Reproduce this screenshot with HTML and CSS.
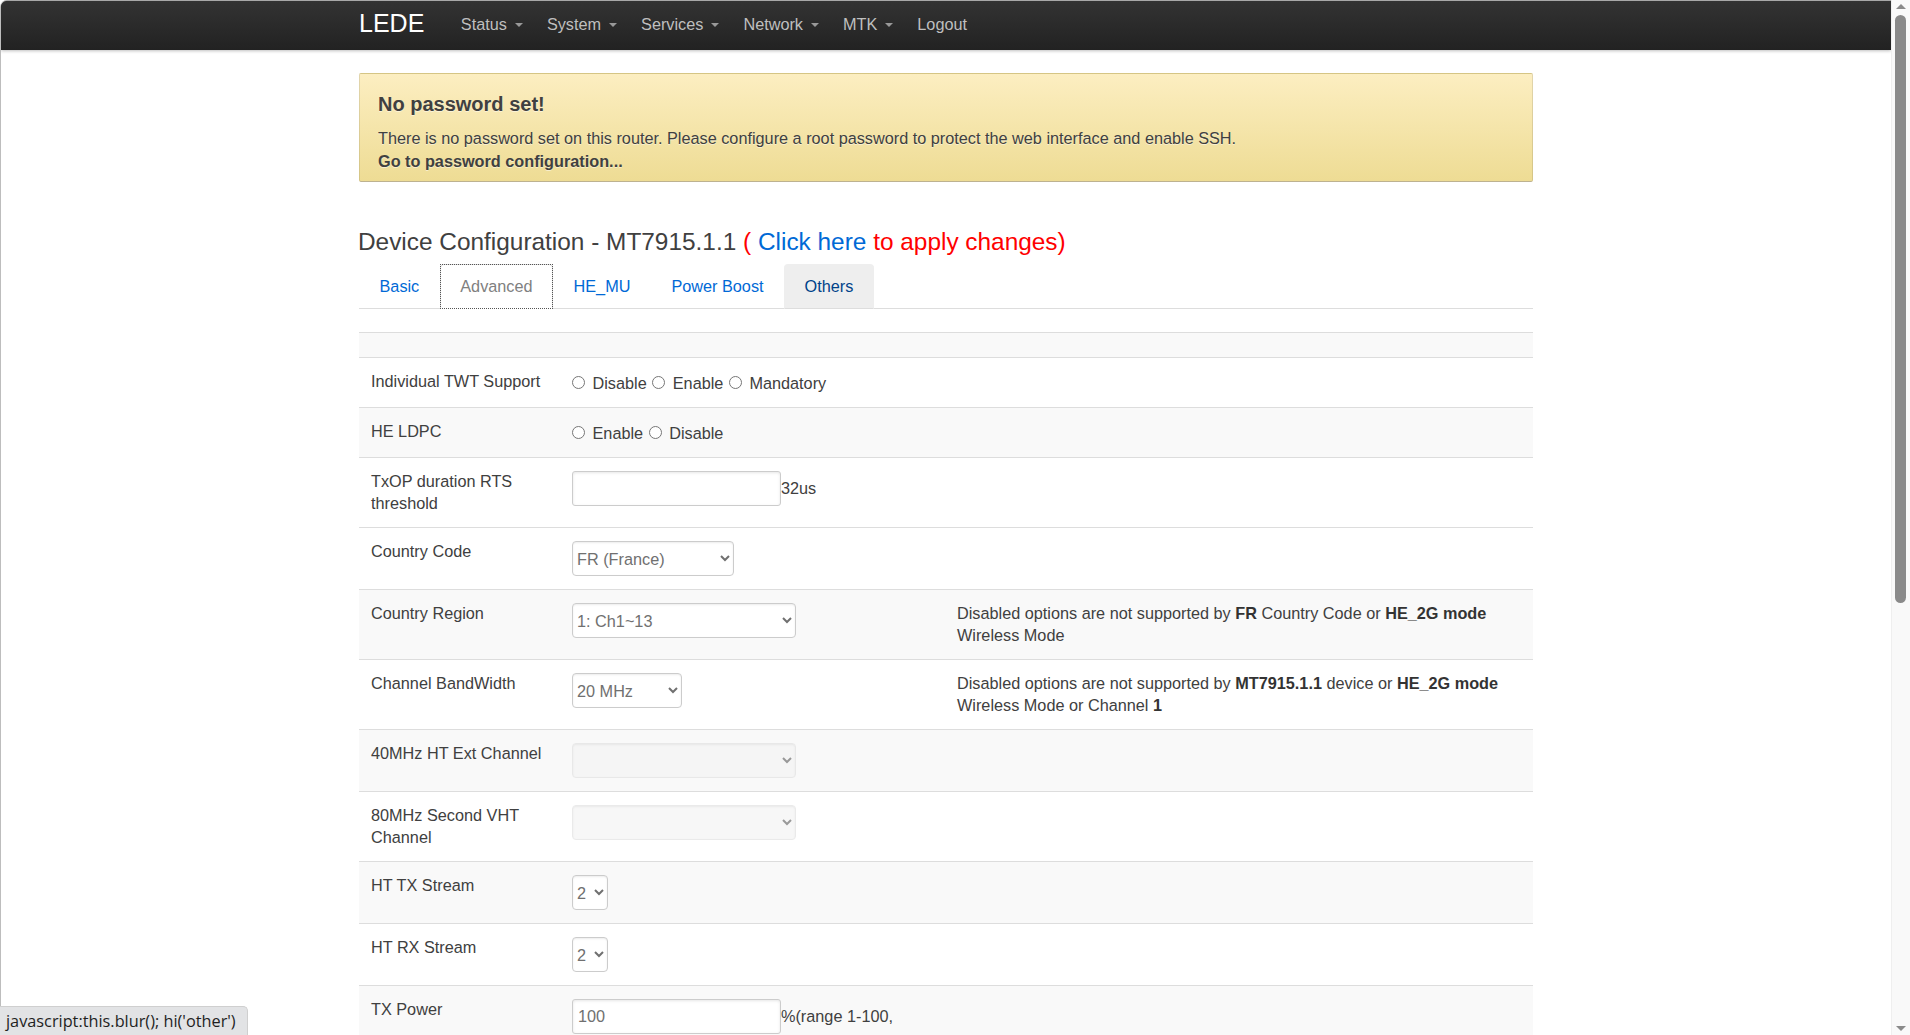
FILE: index.html
```html
<!DOCTYPE html>
<html lang="en">
<head>
    <meta charset="UTF-8">
    <meta name="viewport" content="width=device-width, initial-scale=1.0">
    <title>LEDE - Wireless - MT7915.1.1</title>
    <link rel="stylesheet" href="styles.css">
</head>
<body>
    <div class="window">
        <header class="topbar">
            <div class="topbar-inner">
                <a class="brand" href="#">LEDE</a>
                <ul class="nav">
                    <li><a href="#">Status<b class="caret"></b></a></li>
                    <li><a href="#">System<b class="caret"></b></a></li>
                    <li><a href="#">Services<b class="caret"></b></a></li>
                    <li><a href="#">Network<b class="caret"></b></a></li>
                    <li><a href="#">MTK<b class="caret"></b></a></li>
                    <li><a href="#">Logout</a></li>
                </ul>
            </div>
        </header>

        <div class="container">
            <div class="alert-message warning">
                <h4>No password set!</h4>
                <p>There is no password set on this router. Please configure a root password to protect the web interface and enable SSH.</p>
                <a class="alert-link" href="#">Go to password configuration...</a>
            </div>

            <h2 class="title">Device Configuration - MT7915.1.1 <span class="apply">( <a href="#">Click here</a> to apply changes)</span></h2>

            <ul class="tabs">
                <li><a href="#">Basic</a></li>
                <li class="active"><a href="#">Advanced</a></li>
                <li><a href="#">HE_MU</a></li>
                <li><a href="#">Power Boost</a></li>
                <li class="hover"><a href="#">Others</a></li>
            </ul>

            <table class="cbi-table">
                <colgroup>
                    <col class="col-label">
                    <col class="col-ctl">
                    <col>
                </colgroup>
                <tr class="head alt"><td></td><td></td><td></td></tr>
                <tr class="radios">
                    <td>Individual TWT Support</td>
                    <td class="ctl" colspan="2">
                        <input type="radio" name="twt"> Disable
                        <input type="radio" name="twt"> Enable
                        <input type="radio" name="twt"> Mandatory
                    </td>
                </tr>
                <tr class="radios alt">
                    <td>HE LDPC</td>
                    <td class="ctl" colspan="2">
                        <input type="radio" name="ldpc"> Enable
                        <input type="radio" name="ldpc"> Disable
                    </td>
                </tr>
                <tr>
                    <td>TxOP duration RTS threshold</td>
                    <td class="ctl"><input class="txt" type="text">32us</td>
                    <td class="note"></td>
                </tr>
                <tr>
                    <td>Country Code</td>
                    <td class="ctl">
                        <select class="w-cc"><option>FR (France)</option></select>
                    </td>
                    <td class="note"></td>
                </tr>
                <tr class="alt">
                    <td>Country Region</td>
                    <td class="ctl">
                        <select class="w-wide"><option>1: Ch1~13</option></select>
                    </td>
                    <td class="note">Disabled options are not supported by <strong>FR</strong> Country Code or <strong>HE_2G mode</strong> Wireless Mode</td>
                </tr>
                <tr>
                    <td>Channel BandWidth</td>
                    <td class="ctl">
                        <select class="w-bw"><option>20 MHz</option></select>
                    </td>
                    <td class="note">Disabled options are not supported by <strong>MT7915.1.1</strong> device or <strong>HE_2G mode</strong> Wireless Mode or Channel <strong>1</strong></td>
                </tr>
                <tr class="alt">
                    <td>40MHz HT Ext Channel</td>
                    <td class="ctl">
                        <select class="w-wide" disabled><option></option></select>
                    </td>
                    <td class="note"></td>
                </tr>
                <tr>
                    <td>80MHz Second VHT Channel</td>
                    <td class="ctl">
                        <select class="w-wide" disabled><option></option></select>
                    </td>
                    <td class="note"></td>
                </tr>
                <tr class="alt">
                    <td>HT TX Stream</td>
                    <td class="ctl">
                        <select class="w-stream"><option>2</option></select>
                    </td>
                    <td class="note"></td>
                </tr>
                <tr>
                    <td>HT RX Stream</td>
                    <td class="ctl">
                        <select class="w-stream"><option>2</option></select>
                    </td>
                    <td class="note"></td>
                </tr>
                <tr class="alt">
                    <td>TX Power</td>
                    <td class="ctl"><input class="txt" type="text" value="100">%(range 1-100, default 100)</td>
                    <td class="note"></td>
                </tr>
                <tr>
                    <td>Beacon Interval</td>
                    <td class="ctl"><input class="txt" type="text" value="100">ms</td>
                    <td class="note"></td>
                </tr>
            </table>
        </div>
    </div>

    <div class="scrollbar">
        <span class="arrow up"></span>
        <span class="thumb"></span>
        <span class="arrow down"></span>
    </div>

    <div class="statusbar">javascript:this.blur(); hi('other')</div>
</body>
</html>
```

FILE: styles.css
```css
* {
    box-sizing: border-box;
}

html, body {
    margin: 0;
    height: 100%;
    overflow: hidden;
}

body {
    font-family: "Liberation Sans", Arial, sans-serif;
    font-size: 16.25px;
    line-height: 22px;
    color: #404040;
    background: #fff;
}

a {
    color: #0069d6;
    text-decoration: none;
}

.window {
    width: 1891px;
    height: 100%;
    border-top: 1px solid #a8a8a8;
    border-left: 1px solid #bdbdbd;
    border-top-left-radius: 7px;
    overflow: hidden;
}

/* top bar */
.topbar {
    height: 49px;
    background: #222 linear-gradient(#333, #222);
    box-shadow: 0 1px 3px rgba(0, 0, 0, .25);
}

.topbar-inner {
    width: 1174px;
    margin: 0 auto;
    display: flex;
    align-items: flex-start;
}

.brand {
    color: #fff;
    font-size: 25px;
    line-height: 45px;
    margin-right: 24.5px;
}

.nav {
    display: flex;
    margin: 0;
    padding: 0;
    list-style: none;
}

.nav a {
    display: block;
    padding: 0 12px;
    color: #bfbfbf;
    font-size: 16.25px;
    line-height: 47px;
}

.caret {
    display: inline-block;
    width: 0;
    height: 0;
    margin-left: 8px;
    border-top: 4px solid #999;
    border-left: 4px solid transparent;
    border-right: 4px solid transparent;
    vertical-align: 3px;
}

/* page */
.container {
    width: 1174px;
    margin: 0 auto;
    padding-top: 23px;
}

.alert-message {
    padding: 19px 19px 8px 18px;
    border: 1px solid rgba(0, 0, 0, .1);
    border-bottom-color: rgba(0, 0, 0, .25);
    border-radius: 2px;
    background: #eedc94 linear-gradient(#fceec1, #eedc94);
    text-shadow: 0 1px 0 rgba(255, 255, 255, .5);
}

.alert-message h4 {
    margin: 0 0 12px;
    font-size: 20px;
    line-height: 22px;
    font-weight: bold;
}

.alert-message p {
    margin: 0;
    line-height: 23px;
}

.alert-link {
    display: block;
    color: #404040;
    font-weight: bold;
    line-height: 23px;
}

.title {
    margin: 46px 0 0 -1px;
    font-size: 24.4px;
    line-height: 28px;
    font-weight: normal;
    color: #404040;
}

.apply {
    color: #f00;
}

/* tabs */
.tabs {
    display: flex;
    margin: 8px 0 0;
    padding: 0;
    list-style: none;
    border-bottom: 1px solid #ddd;
}

.tabs li {
    margin-bottom: -1px;
}

.tabs a {
    display: block;
    padding: 0 19.5px;
    line-height: 43px;
    border: 1px solid transparent;
    border-radius: 4px 4px 0 0;
}

.tabs .active {
    outline: 1px dotted #555;
    outline-offset: -1px;
}

.tabs .active a {
    color: #808080;
    background: #fff;
    border-color: #ddd #ddd transparent;
}

.tabs .hover a {
    color: #00438a;
    background: #eee;
    border-color: #eee #eee #ddd;
}

/* config table */
.cbi-table {
    width: 100%;
    margin-top: 23px;
    border-collapse: collapse;
    table-layout: fixed;
}

.col-label {
    width: 207px;
}

.col-ctl {
    width: 378px;
}

.cbi-table td {
    padding: 13px 6px 13px 12px;
    border-top: 1px solid #ddd;
    vertical-align: top;
    line-height: 21.5px;
}

.cbi-table .radios td {
    padding-bottom: 14.5px;
}

.cbi-table .radios td.ctl {
    padding-top: 15px;
    padding-bottom: 12.5px;
}

.cbi-table .head td {
    height: 25px;
    padding: 0;
}

.cbi-table .alt td {
    background: #f9f9f9;
}

.cbi-table td.ctl {
    padding-left: 6px;
}

.cbi-table td.note {
    padding-left: 13px;
}

.note strong {
    color: #333;
}

input[type="radio"] {
    margin: 0 3px 0 1px;
}

input[type="radio"]:first-child {
    margin-left: 0;
}

.txt {
    width: 209px;
    height: 35px;
    padding: 0 5px;
    font: inherit;
    color: #707070;
    border: 1px solid #ccc;
    border-radius: 3px;
    box-shadow: inset 0 1px 3px rgba(0, 0, 0, .1);
}

select {
    display: block;
    height: 35px;
    padding: 0;
    font: inherit;
    color: #707070;
    background: #fff;
    border: 1px solid #ccc;
    border-radius: 4px;
    box-shadow: inset 0 1px 2px rgba(0, 0, 0, .08);
}

select:disabled {
    background: #f4f4f4;
    border-color: #e2e2e2;
}

.w-cc {
    width: 162px;
}

.w-wide {
    width: 224px;
}

.w-bw {
    width: 110px;
}

.w-stream {
    width: 36px;
}

/* browser chrome over the page */
.scrollbar {
    position: fixed;
    top: 0;
    right: 0;
    width: 19px;
    height: 100%;
    background: #f9f9f9;
    border-left: 1px solid #efefef;
}

.scrollbar .thumb {
    position: absolute;
    top: 15px;
    left: 3px;
    width: 11px;
    height: 588px;
    border-radius: 6px;
    background: #8a8a8a;
}

.scrollbar .arrow {
    position: absolute;
    left: 4px;
    width: 0;
    height: 0;
    border-left: 5px solid transparent;
    border-right: 5px solid transparent;
}

.scrollbar .up {
    top: 4px;
    border-bottom: 5px solid #8a8a8a;
}

.scrollbar .down {
    bottom: 4px;
    border-top: 5px solid #8a8a8a;
}

.statusbar {
    position: fixed;
    left: 0;
    bottom: 0;
    width: 248px;
    height: 29px;
    padding: 0 6px;
    font-family: "Open Sans", "Noto Sans", sans-serif;
    font-size: 16.3px;
    line-height: 28px;
    color: #1f1f1f;
    background: #e2e3e5;
    border-top: 1px solid #cfcfcf;
    border-right: 1px solid #cfcfcf;
    border-top-right-radius: 5px;
    white-space: nowrap;
}
```
